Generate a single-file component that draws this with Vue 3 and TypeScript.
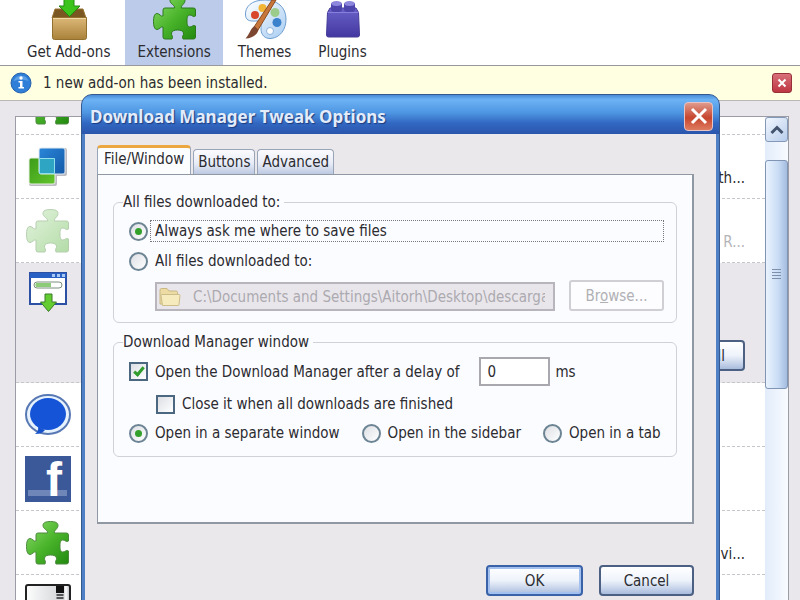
<script setup lang="ts">
import { ref } from 'vue'

type IconName = 'puzzle' | 'squares' | 'puzzle-off' | 'download' | 'bubble' | 'social' | 'device'

interface AddonRow {
  id: number
  icon: IconName
  text?: string
  disabled?: boolean
  selected?: boolean
}

const puzzlePath =
  'M12 12H21.5C22.5 9.5 17 8 17 4.5C17 1.5 20 .5 24.5 .5S32 1.5 32 4.5C32 8 27.5 9.5 28.5 12H40.5Q42.5 12 42.5 14V20C40 21.5 39 19 37 19C34.5 19 34 21.5 34 25S34.5 31 37 31C39 31 40 28.5 42.5 30V41Q42.5 43 40.5 43H30C28.5 40.5 31 39 30.5 37C30 34.8 27.5 34 24.5 34S19 34.8 18.5 37C18 39 20.5 40.5 19 43H12Q10 43 10 41V31C8 30 6.5 33.5 4 33.5C1.5 33.5 .5 30 .5 25.5S1.5 17.5 4 17.5C6.5 17.5 8 21 10 20V14Q10 12 12 12Z'

const rows: AddonRow[] = [
  { id: 1, icon: 'puzzle' },
  { id: 2, icon: 'squares', text: 'th...' },
  { id: 3, icon: 'puzzle-off', text: 'R...', disabled: true },
  { id: 4, icon: 'download', selected: true },
  { id: 5, icon: 'bubble' },
  { id: 6, icon: 'social' },
  { id: 7, icon: 'puzzle', text: 'vi...' },
  { id: 8, icon: 'device' },
]

const tabs = ['File/Window', 'Buttons', 'Advanced']
const activeTab = ref('File/Window')
const saveMode = ref('ask')
const folder = ref('C:\\Documents and Settings\\Aitorh\\Desktop\\descargas')
const openManager = ref(true)
const delay = ref('0')
const closeWhenDone = ref(false)
const openIn = ref('window')
</script>

<template>
  <div class="page">
    <svg class="defs" aria-hidden="true">
      <defs>
        <linearGradient id="green" x1="0" y1="0" x2="1" y2="1">
          <stop offset="0" stop-color="#8fdc6c" />
          <stop offset="0.5" stop-color="#4bb52c" />
          <stop offset="1" stop-color="#228a10" />
        </linearGradient>
        <linearGradient id="pale" x1="0" y1="0" x2="1" y2="1">
          <stop offset="0" stop-color="#e2f3dc" />
          <stop offset="1" stop-color="#b4dca8" />
        </linearGradient>
        <linearGradient id="box" x1="0" y1="0" x2="0" y2="1">
          <stop offset="0" stop-color="#dcb878" />
          <stop offset="1" stop-color="#a9813a" />
        </linearGradient>
        <linearGradient id="brick" x1="0" y1="0" x2="0" y2="1">
          <stop offset="0" stop-color="#6a62c8" />
          <stop offset="1" stop-color="#4237a0" />
        </linearGradient>
        <linearGradient id="blue" x1="0" y1="0" x2="1" y2="1">
          <stop offset="0" stop-color="#2a86d8" />
          <stop offset="1" stop-color="#1359a8" />
        </linearGradient>
        <linearGradient id="lime" x1="0" y1="0" x2="1" y2="1">
          <stop offset="0" stop-color="#3c9c18" />
          <stop offset="1" stop-color="#62c42c" />
        </linearGradient>
        <linearGradient id="palette" x1="0" y1="0" x2="1" y2="1">
          <stop offset="0" stop-color="#ffffff" />
          <stop offset="1" stop-color="#a9cdf2" />
        </linearGradient>
        <linearGradient id="screen" x1="0" y1="0" x2="1" y2="0">
          <stop offset="0" stop-color="#fdfdfd" />
          <stop offset="1" stop-color="#c9ccd0" />
        </linearGradient>
      </defs>
    </svg>

    <nav class="toolbar">
      <button class="tool" type="button">
        <svg width="48" height="40" viewBox="0 8 48 40" aria-hidden="true">
          <path d="M10 17H38L41 26H7Z" fill="#7a5620" stroke="#9a7434" />
          <path d="M7.500 25.500H41.500V45.500Q41.500 47.500 39.500 47.500H9.500Q7.500 47.500 7.500 45.500Z" fill="url(#box)" stroke="#94702e" />
          <path d="M8 26.500H41" stroke="#f0d8a4" />
          <path d="M19 5H29V14H35L24.500 24.500L14 14H19Z" fill="#3cc41c" stroke="#238a10" />
        </svg>
        <span>Get Add-ons</span>
      </button>
      <button class="tool current" type="button">
        <svg width="48" height="40" viewBox="0 8 48 40" aria-hidden="true">
          <path :d="puzzlePath" transform="translate(3 4)" fill="url(#green)" stroke="#2d7a1e" />
        </svg>
        <span>Extensions</span>
      </button>
      <button class="tool" type="button">
        <svg width="48" height="40" viewBox="0 8 48 40" aria-hidden="true">
          <path d="M24 8C10 8 4 15 4.500 23C5 30 11 29 16 29C21 29 20 33 20 37C20 43 24 47 30 46.500C39 45.500 45 38 45 27C45 15 36 8 24 8Z" fill="url(#palette)" stroke="#6f9fd0" />
          <circle cx="14" cy="23" r="4" fill="#d8452c" />
          <circle cx="21.500" cy="16" r="4" fill="#f2b535" />
          <circle cx="34" cy="20.500" r="4.500" fill="#9ccc8c" />
          <circle cx="36" cy="30.500" r="4.500" fill="#3a82cc" />
          <circle cx="29" cy="39" r="3.500" fill="#fff" stroke="#8fb4dc" />
          <path d="M31 8L13 35L17 38L35 8Z" fill="#c8773c" stroke="#8d4b20" />
          <path d="M13.500 34C9 37 9 42 4.500 46.500C11 46.500 16 43 17.500 38Z" fill="#7d4630" />
        </svg>
        <span>Themes</span>
      </button>
      <button class="tool" type="button">
        <svg width="48" height="40" viewBox="0 8 48 40" aria-hidden="true">
          <path d="M9.500 20.500L12 16H38L40.500 20.500L41.500 43Q41.500 45 39.500 45H10.500Q8.500 45 8.500 43Z" fill="url(#brick)" stroke="#463c98" />
          <path d="M9.500 20.500H40.500" stroke="#867fdc" />
          <rect x="13" y="10" width="11" height="10" rx="3" fill="#4d44ac" />
          <ellipse cx="18.500" cy="11.500" rx="5" ry="2.500" fill="#8c86dd" />
          <rect x="26" y="10" width="11" height="10" rx="3" fill="#4d44ac" />
          <ellipse cx="31.500" cy="11.500" rx="5" ry="2.500" fill="#8c86dd" />
        </svg>
        <span>Plugins</span>
      </button>
    </nav>

    <div class="notice">
      <svg width="22" height="22" viewBox="0 0 22 22" aria-hidden="true">
        <circle cx="11" cy="11" r="10" fill="#2f7fd8" stroke="#2460ac" />
        <path d="M3.500 9A8 8 0 0 1 18.500 9Q11 6 3.500 9Z" fill="#5c9fe6" />
        <circle cx="11" cy="6" r="1.700" fill="#fff" />
        <path d="M8.500 9H12.500V15H14V16.500H8.500V15H10V10.500H8.500Z" fill="#fff" />
      </svg>
      <span class="notice-text">1 new add-on has been installed.</span>
      <button class="notice-close" type="button" aria-label="Dismiss">
        <svg width="10" height="10" viewBox="0 0 10 10" aria-hidden="true">
          <path d="M1.500 1.500L8.500 8.500M8.500 1.500L1.500 8.500" stroke="#fff" stroke-width="2" />
        </svg>
      </button>
    </div>

    <main class="content">
      <div class="list">
        <ul class="rows">
          <li v-for="row in rows" :key="row.id" class="row" :class="{ selected: row.selected, disabled: row.disabled }">
            <span class="slot">
              <svg v-if="row.icon === 'puzzle' || row.icon === 'puzzle-off'" width="44" height="44" viewBox="0 0 44 44" aria-hidden="true">
                <path :d="puzzlePath" :fill="row.disabled ? 'url(#pale)' : 'url(#green)'" :stroke="row.disabled ? '#b5cfae' : '#4c8a3e'" />
              </svg>
              <svg v-else-if="row.icon === 'squares'" width="40" height="40" viewBox="0 0 40 40" aria-hidden="true">
                <path d="M12 1H37Q39 1 39 3V27Q39 29 37 29H29V37Q29 39 27 39H3Q1 39 1 37V13H11Z" fill="#bcbcc2" />
                <rect x="1" y="11" width="26" height="26" rx="2" fill="url(#lime)" stroke="#e8f0e4" />
                <rect x="11" y="1" width="26" height="26" rx="2" fill="url(#blue)" stroke="#dfe8f2" />
                <path d="M11.500 11.500H26.500V26.500H11.500Z" fill="#2fa5c4" stroke="#8fe0ec" />
              </svg>
              <svg v-else-if="row.icon === 'download'" width="38" height="41" viewBox="0 0 38 41" aria-hidden="true">
                <rect x="1" y="1" width="36" height="31" fill="#fff" stroke="#2b50a4" stroke-width="2" />
                <path d="M1 1H37V6H1Z" fill="#2960c4" />
                <path d="M23 2H26V5H23ZM28 2H31V5H28ZM33 2H36V5H33Z" fill="#a9c8f4" />
                <rect x="5" y="10" width="28" height="6" rx="3" fill="#fff" stroke="#78907c" />
                <path d="M7 11H22V15H7Q5.500 13 7 11Z" fill="#8ccc78" />
                <path d="M16 22H23V30H27.500L19.500 39.500L11.500 30H16Z" fill="#62cc30" stroke="#3a7c2a" />
              </svg>
              <svg v-else-if="row.icon === 'bubble'" width="46" height="42" viewBox="0 0 46 42" aria-hidden="true">
                <ellipse cx="23" cy="20.500" rx="22" ry="19.500" fill="#e6f2fd" stroke="#5878b4" stroke-width="2" />
                <path d="M10 40Q14 37 13 33L20 36Q17 40 10 40Z" fill="#1552cc" />
                <ellipse cx="23" cy="20" rx="18" ry="16" fill="#1554d6" />
              </svg>
              <svg v-else-if="row.icon === 'social'" class="social" width="46" height="46" viewBox="0 0 46 46" aria-hidden="true">
                <rect width="46" height="46" fill="#3b5998" />
                <rect x="3" y="34" width="39" height="6" fill="#6f86b8" />
                <text class="social-mark" x="21" y="40">f</text>
              </svg>
              <svg v-else width="46" height="46" viewBox="0 0 46 46" aria-hidden="true">
                <rect x="1" y="1" width="44" height="44" rx="2" fill="url(#screen)" stroke="#222" stroke-width="2" />
                <rect x="31" y="2" width="8" height="7" fill="#111" />
                <path d="M35 10V44" stroke="#555" stroke-width="7" stroke-dasharray="2 1" />
                <path d="M41 2V44" stroke="#f4f4f4" stroke-width="3" />
              </svg>
            </span>
            <span v-if="row.text" class="row-text">{{ row.text }}</span>
            <button v-if="row.selected" class="btn row-btn" type="button">Uninstall</button>
          </li>
        </ul>
        <div class="scrollbar">
          <button class="scroll-up" type="button" aria-label="Scroll up">
            <svg width="14" height="10" viewBox="0 0 14 10" aria-hidden="true">
              <path d="M1.500 8L7 2.500L12.500 8" fill="none" stroke="#44546e" stroke-width="3" />
            </svg>
          </button>
          <div class="thumb"><span class="grip"></span></div>
        </div>
      </div>
    </main>

    <section class="dialog" role="dialog" aria-labelledby="dialog-title">
      <header class="titlebar">
        <h1 id="dialog-title">Download Manager Tweak Options</h1>
        <button class="close" type="button" aria-label="Close">
          <svg width="18" height="18" viewBox="0 0 18 18" aria-hidden="true">
            <path d="M2 2L16 16M16 2L2 16" stroke="#fff" stroke-width="3" />
          </svg>
        </button>
      </header>

      <div class="dialog-body">
        <div class="tabs" role="tablist">
          <button
            v-for="tab in tabs"
            :key="tab"
            class="tab"
            :class="{ active: tab === activeTab }"
            type="button"
            role="tab"
            :aria-selected="tab === activeTab"
            @click="activeTab = tab"
          >
            {{ tab }}
          </button>
        </div>

        <div class="panel" role="tabpanel">
          <fieldset class="group save-group">
            <legend>All files downloaded to:</legend>
            <label class="option">
              <input v-model="saveMode" class="radio" type="radio" name="save" value="ask" />
              <span class="focused">Always ask me where to save files</span>
            </label>
            <label class="option">
              <input v-model="saveMode" class="radio" type="radio" name="save" value="folder" />
              <span>All files downloaded to:</span>
            </label>
            <div class="path-row">
              <div class="path">
                <svg width="22" height="20" viewBox="0 0 22 20" aria-hidden="true">
                  <path d="M1 17V3Q1 1.500 2.500 1.500H8L10 4H17Q18.500 4 18.500 5.500V17Z" fill="#ecdca4" stroke="#c9b884" />
                  <path d="M3.500 18.500L2 8.500Q2 7.500 3 7.500H20Q21 7.500 21 8.500L20 17.500Q20 18.500 19 18.500Z" fill="#f5ebbc" stroke="#cdbd8a" />
                </svg>
                <input v-model="folder" type="text" aria-label="Download folder" disabled />
              </div>
              <button class="browse" type="button" disabled>Br<u>o</u>wse...</button>
            </div>
          </fieldset>

          <fieldset class="group window-group">
            <legend>Download Manager window</legend>
            <div class="delay-row">
              <label class="option">
                <input v-model="openManager" class="check" type="checkbox" />
                <span>Open the Download Manager after a delay of</span>
              </label>
              <input v-model="delay" class="delay" type="text" aria-label="Delay in milliseconds" />
              <span class="unit">ms</span>
            </div>
            <label class="option nested">
              <input v-model="closeWhenDone" class="check" type="checkbox" />
              <span>Close it when all downloads are finished</span>
            </label>
            <div class="choices">
              <label class="option">
                <input v-model="openIn" class="radio" type="radio" name="open" value="window" />
                <span>Open in a separate window</span>
              </label>
              <label class="option">
                <input v-model="openIn" class="radio" type="radio" name="open" value="sidebar" />
                <span>Open in the sidebar</span>
              </label>
              <label class="option">
                <input v-model="openIn" class="radio" type="radio" name="open" value="tab" />
                <span>Open in a tab</span>
              </label>
            </div>
          </fieldset>
        </div>

        <footer class="actions">
          <button class="btn primary" type="button">OK</button>
          <button class="btn" type="button">Cancel</button>
        </footer>
      </div>
    </section>
  </div>
</template>

<style>
body {
  margin: 0;
  overflow: hidden;
}
</style>

<style scoped>
.page {
  position: relative;
  display: flex;
  flex-direction: column;
  height: 100vh;
  overflow: hidden;
  background: #e9e7ec;
  color: #2b2b30;
  font-family: 'DejaVu Sans Condensed', 'Open Sans', sans-serif;
  font-size: 15px;
  line-height: 20px;
}

.page *,
.page *::after {
  box-sizing: border-box;
}

button,
input {
  margin: 0;
  padding: 0;
  color: inherit;
  font: inherit;
}

svg {
  display: block;
  flex: none;
}

.defs {
  position: absolute;
  width: 0;
  height: 0;
}

.toolbar {
  display: flex;
  flex: none;
  gap: 3px;
  padding-left: 15px;
  border-bottom: 1px solid #98989e;
  background: #fff;
}

.tool {
  display: flex;
  flex-direction: column;
  align-items: center;
  gap: 2px;
  padding: 0 12px 3px;
  border: 0;
  background: none;
}

.tool.current {
  background: #bccbe9;
}

.notice {
  display: flex;
  flex: none;
  align-items: center;
  gap: 11px;
  padding: 6px 8px 6px 10px;
  border-bottom: 1px solid #b8b8b4;
  background: #ffffe1;
}

.notice-text {
  flex: 1;
}

.notice-close {
  display: grid;
  place-items: center;
  width: 20px;
  height: 20px;
  border: 1px solid #98303a;
  border-radius: 3px;
  background: linear-gradient(#d8707a, #bd3642);
}

.content {
  display: flex;
  flex: 1;
  min-height: 0;
  padding: 15px 11px 0 15px;
}

.list {
  display: flex;
  flex: 1;
  overflow: hidden;
  border: 1px solid #9c9ca6;
  border-bottom: 0;
  background: #fff;
}

.rows {
  flex: 1;
  margin: -46px 0 0;
  padding: 0;
  list-style: none;
}

.row {
  display: flex;
  align-items: center;
  justify-content: space-between;
  height: 64px;
  padding-right: 20px;
  border-bottom: 1px dashed #c6c6ca;
}

.row.selected {
  align-items: stretch;
  height: 120px;
  padding-top: 9px;
  padding-bottom: 11px;
  background: #e9e7ec;
}

.row.disabled {
  color: #b4b4b8;
}

.slot {
  display: flex;
  justify-content: center;
  width: 64px;
}

.row-text {
  align-self: flex-end;
  padding-bottom: 10px;
}

.social {
  overflow: visible;
}

.social-mark {
  fill: #fff;
  font-family: 'Liberation Sans', sans-serif;
  font-size: 48px;
  font-weight: 700;
}

.scrollbar {
  display: flex;
  flex: none;
  flex-direction: column;
  gap: 18px;
  width: 23px;
  background: linear-gradient(90deg, #e2ecfa, #f8fbff);
}

.scroll-up {
  display: grid;
  place-items: center;
  height: 25px;
  border: 1px solid #8498b8;
  border-radius: 3px;
  background: linear-gradient(135deg, #f2f7fe, #b8cdec);
}

.thumb {
  display: grid;
  place-items: center;
  height: 229px;
  border: 1px solid #8094b4;
  border-radius: 3px;
  background: linear-gradient(90deg, #eaf3fe, #c8dbf4 60%, #a4bcdf);
}

.grip {
  width: 9px;
  height: 11px;
  background: repeating-linear-gradient(#7c90ac 0 1px, transparent 1px 3px);
}

.dialog {
  position: absolute;
  top: 94px;
  right: 80px;
  bottom: -20px;
  left: 81px;
  display: flex;
  flex-direction: column;
  border: 1px solid #35598f;
  border-radius: 11px 11px 0 0;
  background: #4f7fc4;
}

.titlebar {
  display: flex;
  flex: none;
  align-items: center;
  justify-content: space-between;
  height: 39px;
  padding: 0 6px 0 8px;
  border-radius: 10px 10px 0 0;
  background: linear-gradient(#4a8cd6, #6cb2f4 12%, #4e96e2 45%, #3268c2 72%, #2a55ac);
}

.titlebar h1 {
  margin: 0;
  padding-top: 4px;
  color: #e2ecfa;
  font-family: 'Noto Sans', sans-serif;
  font-size: 17px;
  font-weight: 700;
  line-height: 24px;
  text-shadow: 1px 1px 1px #1c3c80;
}

.close {
  display: grid;
  place-items: center;
  width: 29px;
  height: 29px;
  margin-top: 3px;
  border: 1px solid #e8c4c4;
  border-radius: 4px;
  background: linear-gradient(#e09a8c, #c6452e 55%, #de7c60);
}

.dialog-body {
  flex: 1;
  margin: 0 3px;
  padding: 11px 22px 0 12px;
  background: #ebe8ec;
}

.tabs {
  display: flex;
  align-items: flex-end;
  gap: 2px;
}

.tab {
  height: 25px;
  padding: 0 4px;
  border: 1px solid #98a4b8;
  border-bottom: 0;
  border-radius: 4px 4px 0 0;
  background: linear-gradient(#fbfbfe, #e8ecf6 55%, #bcc9e2);
}

.tab.active {
  height: 29px;
  padding: 0 6px 4px;
  border-top: 3px solid #eca840;
  background: #fcfdff;
}

.panel {
  min-height: 350px;
  padding: 17px 15px 16px;
  border: 1px solid #9098a4;
  border-right-width: 2px;
  border-bottom-width: 2px;
  background: #fbfcff;
}

.group {
  display: flex;
  flex-direction: column;
  min-width: 0;
  margin: 0 0 9px;
  border: 1px solid #d0d0d8;
  border-radius: 6px;
}

.save-group {
  gap: 8px;
  padding: 8px 12px 11px 15px;
}

.window-group {
  gap: 7px;
  padding: 5px 12px 12px 15px;
}

.group legend {
  margin-left: -6px;
  padding: 0 4px 0 0;
}

.option {
  display: flex;
  align-items: center;
  gap: 7px;
  height: 22px;
  white-space: nowrap;
}

.focused {
  flex: 1;
  margin-left: -5px;
  padding-left: 4px;
  border: 1px dotted #77777c;
}

.nested {
  margin-left: 27px;
}

.radio,
.check {
  display: grid;
  flex: none;
  place-items: center;
  width: 19px;
  height: 19px;
  border: 2px solid #6c8494;
  appearance: none;
  background: linear-gradient(135deg, #dcdfe4, #fff);
}

.radio {
  border-radius: 50%;
}

.radio:checked::after {
  width: 7px;
  height: 7px;
  border-radius: 50%;
  background: #34a02c;
  content: '';
}

.check {
  border-color: #4c6880;
}

.check:checked::after {
  width: 6px;
  height: 11px;
  margin-bottom: 3px;
  border: solid #2f9c2c;
  border-width: 0 3px 3px 0;
  content: '';
  transform: rotate(40deg);
}

.path-row {
  display: flex;
  align-items: flex-end;
  gap: 14px;
  padding-left: 26px;
}

.path {
  display: flex;
  flex: 1;
  align-items: center;
  gap: 12px;
  height: 29px;
  padding: 0 8px 0 2px;
  border: 2px solid #b8b6bc;
  background: #e9e6eb;
}

.path input {
  flex: 1;
  min-width: 0;
  border: 0;
  background: none;
  color: #acaab0;
}

.browse {
  width: 95px;
  height: 31px;
  border: 2px solid #cfcfd4;
  border-radius: 3px;
  background: #fdfdff;
  color: #b0b0b4;
}

.delay-row {
  display: flex;
  align-items: center;
}

.delay {
  width: 71px;
  height: 29px;
  margin: 0 5px 0 20px;
  padding: 0 6px;
  border: 2px solid #a8a8ae;
  background: #fff;
}

.choices {
  display: flex;
  gap: 22px;
}

.actions {
  display: flex;
  gap: 16px;
  justify-content: flex-end;
  padding-top: 41px;
}

.btn {
  width: 95px;
  height: 31px;
  border: 2px solid #4c6084;
  border-radius: 4px;
  background: linear-gradient(#fff, #eef3fb 50%, #a9bcdd);
}

.btn.primary {
  width: 97px;
  border-color: #3a62a8;
  box-shadow: inset 0 0 0 2px #a4c0ee;
}

.row-btn {
  align-self: flex-end;
  width: auto;
  padding: 0 18px;
}
</style>
